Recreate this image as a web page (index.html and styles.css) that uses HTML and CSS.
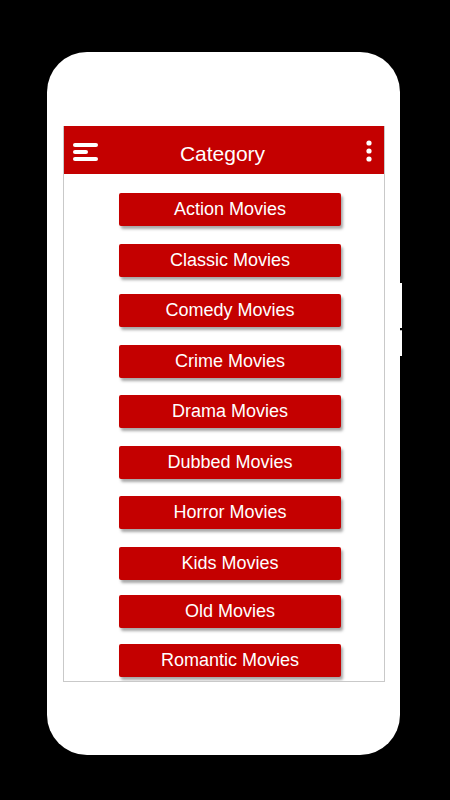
FILE: index.html
```html
<!DOCTYPE html>
<html lang="en">
<head>
    <meta charset="UTF-8">
    <meta name="viewport" content="width=device-width, initial-scale=1.0">
    <title>Category</title>
    <link rel="stylesheet" href="styles.css">
</head>
<body>

<div class="phone">
    <span class="side-key key-volume"></span>
    <span class="side-key key-power"></span>

    <div class="screen">
        <div class="toolbar">
            <button class="menu-btn" aria-label="Menu">
                <svg width="26" height="18" viewBox="0 0 26 18">
                    <g stroke="#fff" stroke-width="4" stroke-linecap="round">
                        <line x1="2" y1="2" x2="23" y2="2"/>
                        <line x1="2" y1="9" x2="13" y2="9"/>
                        <line x1="2" y1="16" x2="23" y2="16"/>
                    </g>
                </svg>
            </button>
            <h1 class="title">Category</h1>
            <button class="more-btn" aria-label="More">
                <svg width="6" height="22" viewBox="0 0 6 22">
                    <circle cx="3" cy="3" r="2.6" fill="#fff"/>
                    <circle cx="3" cy="11" r="2.6" fill="#fff"/>
                    <circle cx="3" cy="19" r="2.6" fill="#fff"/>
                </svg>
            </button>
        </div>

        <div class="categories">
            <button class="cat-btn">Action Movies</button>
            <button class="cat-btn">Classic Movies</button>
            <button class="cat-btn">Comedy Movies</button>
            <button class="cat-btn">Crime Movies</button>
            <button class="cat-btn">Drama Movies</button>
            <button class="cat-btn">Dubbed Movies</button>
            <button class="cat-btn">Horror Movies</button>
            <button class="cat-btn">Kids Movies</button>
            <button class="cat-btn">Old Movies</button>
            <button class="cat-btn">Romantic Movies</button>
        </div>
    </div>
</div>

</body>
</html>
```

FILE: styles.css
```css
body {
    font-family: 'Liberation Sans', Arial, sans-serif;
    margin: 0;
    padding: 52px 0 0 47px;
    height: 800px;
    box-sizing: border-box;
    background-color: #000;
}
.phone {
    position: relative;
    width: 353px;
    height: 703px;
    padding: 74px 0 0 16px;
    box-sizing: border-box;
    background-color: #fff;
    border-radius: 40px;
}
.side-key {
    position: absolute;
    right: -2px;
    width: 2px;
    background-color: #fff;
}
.key-volume {
    top: 231px;
    height: 45px;
}
.key-power {
    top: 278px;
    height: 25px;
    border-top: 1px solid #bbb;
}
.screen {
    width: 322px;
    height: 556px;
    box-sizing: border-box;
    border: 1px solid #c9c9c9;
    border-top: none;
    overflow: hidden;
    background-color: #fff;
}
.toolbar {
    display: grid;
    grid-template-columns: 50px 1fr 50px;
    align-items: center;
    height: 48px;
    margin: 0 -1px;
    background-color: #c40000;
}
.menu-btn,
.more-btn {
    display: flex;
    padding: 0;
    border: none;
    background: none;
}
.menu-btn {
    padding: 3px 0 0 10px;
}
.more-btn {
    justify-content: flex-end;
    padding: 2px 13px 0 0;
}
.title {
    margin: 0;
    padding: 7px 3px 0 0;
    font-size: 21px;
    font-weight: normal;
    text-align: center;
    color: #fff;
}
.categories {
    display: flex;
    flex-direction: column;
    gap: 17.5px;
    padding: 19px 0 0 55px;
}
.cat-btn {
    width: 222px;
    height: 33px;
    padding: 0;
    font-family: inherit;
    font-size: 18px;
    color: #fff;
    background-color: #c40000;
    border: none;
    border-radius: 2px;
    box-shadow: 2px 3px 3px rgba(0, 0, 0, 0.35);
}
.cat-btn:nth-child(n+9) {
    margin-top: -2px;
}
```
